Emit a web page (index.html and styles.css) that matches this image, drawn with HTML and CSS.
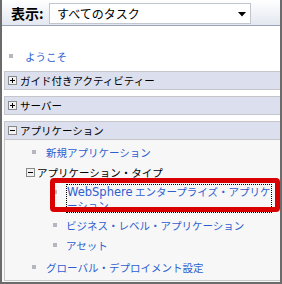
FILE: index.html
```html
<!DOCTYPE html>
<html lang="ja">
<head>
<meta charset="utf-8">
<link rel="stylesheet" href="styles.css">
</head>
<body>
<div class="frame">
  <div class="header">
    <span class="label">表示:</span>
    <div class="select">
      <span class="select-text">すべてのタスク</span>
      <svg class="arrow" width="8" height="5" viewBox="0 0 8 5"><path d="M0 0h8L4 4.5z" fill="#000"/></svg>
    </div>
  </div>
  <div class="top">
    <div class="welcome"><span class="bullet"></span><a class="link">ようこそ</a></div>
    <div class="bar"><svg class="toggle" width="9" height="9" viewBox="0 0 9 9"><rect x="0.5" y="0.5" width="8" height="8" fill="#f2f2f2" stroke="#8a8a8a"/><path d="M2 4.5h5M4.5 2v5" stroke="#000"/></svg>ガイド付きアクティビティー</div>
    <div class="bar"><svg class="toggle" width="9" height="9" viewBox="0 0 9 9"><rect x="0.5" y="0.5" width="8" height="8" fill="#f2f2f2" stroke="#8a8a8a"/><path d="M2 4.5h5M4.5 2v5" stroke="#000"/></svg>サーバー</div>
    <div class="bar"><svg class="toggle" width="9" height="9" viewBox="0 0 9 9"><rect x="0.5" y="0.5" width="8" height="8" fill="#f2f2f2" stroke="#8a8a8a"/><path d="M2 4.5h5" stroke="#000"/></svg>アプリケーション</div>
  </div>
  <div class="panel">
    <div class="item l1"><span class="bullet"></span><a class="link">新規アプリケーション</a></div>
    <div class="item sub"><svg class="toggle" width="9" height="9" viewBox="0 0 9 9"><rect x="0.5" y="0.5" width="8" height="8" fill="#f2f2f2" stroke="#8a8a8a"/><path d="M2 4.5h5" stroke="#000"/></svg>アプリケーション・タイプ</div>
    <div class="item l2 multi"><span class="bullet"></span><a class="link focused"><span class="latin">WebSphere</span> エンタープライズ・アプリケ<br>ーション</a></div>
    <div class="item l2"><span class="bullet"></span><a class="link">ビジネス・レベル・アプリケーション</a></div>
    <div class="item l2"><span class="bullet"></span><a class="link">アセット</a></div>
    <div class="item l1 last"><span class="bullet"></span><a class="link">グローバル・デプロイメント設定</a></div>
  </div>
  <div class="highlight"></div>
</div>
</body>
</html>
```
FILE: styles.css
```css
html, body {
  margin: 0;
  padding: 0;
  background: #ffffff;
}
.frame {
  position: relative;
  width: 282px;
  height: 284px;
  box-sizing: border-box;
  border-left: 2px solid #6b6b6b;
  border-right: 2px solid #6b6b6b;
  border-bottom: 2px solid #6b6b6b;
  background: #f7f7f7;
  font-family: "Noto Sans CJK JP", sans-serif;
  font-size: 10.5px;
  color: #000;
  overflow: hidden;
}
.header {
  box-sizing: border-box;
  height: 26px;
  border-bottom: 1px solid #9ba4b6;
  background: linear-gradient(#ffffff, #e3e7ef);
  display: flex;
  align-items: flex-start;
  padding-top: 3px;
  padding-left: 9px;
}
.label {
  width: 38px;
  font-weight: bold;
  font-size: 14px;
  line-height: 21px;
}
.select {
  width: 202px;
  height: 21px;
  box-sizing: border-box;
  border: 1px solid #c2c6ce;
  background: #fff;
  display: flex;
  align-items: center;
  padding-left: 7px;
}
.select-text {
  font-size: 12px;
  line-height: 19px;
  flex: 1;
}
.arrow {
  margin-right: 4px;
  margin-top: 1px;
}
.top {
  background: #fff;
  padding: 20px 0 0 2px;
}
.welcome {
  display: flex;
  align-items: center;
  height: 20px;
  padding-left: 5px;
}
.welcome .bullet {
  margin-right: 12px;
}
.bullet {
  width: 4px;
  height: 4px;
  background: #b6b6be;
  flex: none;
}
.link {
  color: #2f5fcf;
}
.bar {
  margin-top: 6px;
  height: 19px;
  box-sizing: border-box;
  border: 1px solid #c6c6ca;
  border-right: none;
  background: #dcdfee;
  display: flex;
  align-items: center;
  padding-left: 3px;
}
.welcome + .bar {
  margin-top: 5px;
}
.toggle {
  flex: none;
  margin-right: 3px;
}
.panel {
  margin-left: 2px;
  border-left: 1px solid #c8c8c8;
  border-bottom: 1px solid #c8c8c8;
  background: #f7f7f7;
  padding: 2px 0 3px 0;
}
.item {
  display: flex;
  align-items: center;
  height: 20px;
  white-space: nowrap;
}
.l1 {
  padding-left: 27px;
}
.l1 .bullet {
  margin-right: 10px;
}
.sub {
  padding-left: 21px;
}
.sub .toggle {
  margin-right: 2px;
}
.l2 {
  padding-left: 48px;
}
.l2 .bullet {
  margin-right: 9px;
}
.multi {
  height: auto;
  align-items: flex-start;
  line-height: 13px;
  padding-top: 3px;
  padding-bottom: 3px;
}
.multi .bullet {
  margin-top: 5px;
  margin-right: 10px;
}
.focused {
  outline: 1px dotted #000;
}
.latin {
  font-family: "DejaVu Sans", sans-serif;
  font-size: 11.5px;
  line-height: 13px;
}
.last {
  margin-top: 2px;
}
.highlight {
  position: absolute;
  left: 48px;
  top: 178px;
  width: 230px;
  height: 34px;
  box-sizing: border-box;
  border: 5px solid #d80000;
  border-radius: 4px;
}
```
